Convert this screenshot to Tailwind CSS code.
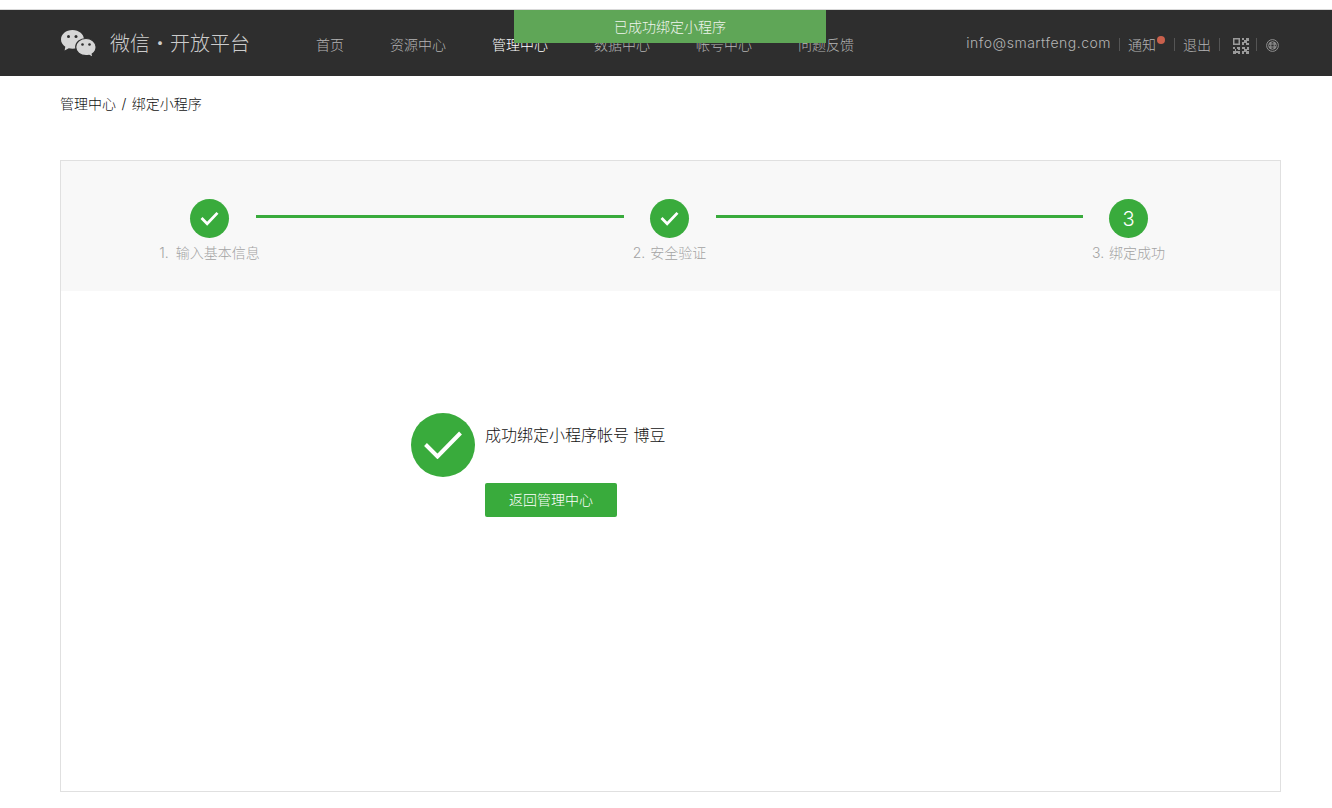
<!DOCTYPE html>
<html lang="zh-CN">
<head>
  <meta charset="UTF-8">
  <title>微信开放平台 - 绑定小程序</title>
  <script src="https://cdn.jsdelivr.net/npm/@tailwindcss/browser@4"></script>
</head>
<body class="bg-white text-[#222] font-['Inter','Noto_Sans_CJK_SC',sans-serif] font-light">
  <div class="relative">
    <!-- Top bar -->
    <div class="h-[10px] border-b border-[#d9d9d9]"></div>
    <header class="h-[66px] bg-[#2e2e2e] flex items-center pl-[60px] pr-[53px] text-[#b4b4b4] text-sm">
      <svg class="w-[37px] h-[30px] shrink-0 mt-[1px]" viewBox="0 0 37 30">
        <path fill="#d6d6d6" d="M12.500 1C6 1 1 5.200 1 10.500c0 3 1.700 5.500 4.300 7.300L4.600 21.500l4.200-2.200c1.200.3 2.400.5 3.700.5 6.500 0 11.500-4.200 11.500-9.300S19 1 12.500 1z"/>
        <path fill="#d6d6d6" stroke="#2e2e2e" stroke-width="1.200" d="M26 9.500c-5.800 0-10.300 3.800-10.300 8.600s4.500 8.600 10.300 8.600c1.100 0 2.200-.2 3.200-.4l3.800 2.200-.8-3.400c2.400-1.600 3.900-4.100 3.900-7 0-4.800-4.400-8.600-10.100-8.600z"/>
        <circle cx="8.500" cy="7.500" r="1.500" fill="#2e2e2e"/>
        <circle cx="16" cy="7.500" r="1.500" fill="#2e2e2e"/>
        <circle cx="22.500" cy="15.500" r="1.300" fill="#2e2e2e"/>
        <circle cx="29.500" cy="15.500" r="1.300" fill="#2e2e2e"/>
      </svg>
      <div class="ml-[13px] text-[20px] leading-none text-[#cccccc] whitespace-nowrap mt-[1px]">微信・开放平台</div>
      <nav class="ml-[66px] flex gap-[46px] whitespace-nowrap mt-[3px]">
        <a>首页</a>
        <a>资源中心</a>
        <a class="text-white">管理中心</a>
        <a>数据中心</a>
        <a>帐号中心</a>
        <a>问题反馈</a>
      </nav>
      <div class="ml-auto flex items-center whitespace-nowrap mt-[3px]">
        <span class="-mt-[3px] tracking-[0.5px]">info@smartfeng.com</span>
        <span class="ml-[8px] w-px h-[13px] bg-[#555]"></span>
        <span class="relative ml-[8px]">通知<span class="absolute -right-[9px] top-[1px] w-[8px] h-[8px] rounded-full bg-[#c9604c]"></span></span>
        <span class="ml-[18px] w-px h-[13px] bg-[#555]"></span>
        <span class="ml-[8px]">退出</span>
        <span class="ml-[8px] w-px h-[13px] bg-[#555]"></span>
        <svg class="ml-[13px] mt-[2px] w-[16px] h-[16px]" viewBox="0 0 16 16" fill="#9a9a9a">
          <path fill-rule="evenodd" d="M0 0h7v7H0zM1.500 1.500v4h4v-4zM9 0h2v2h2V0h3v3h-2v2h2v2h-3V5h-2v2H9V4h2V2H9zM0 9h2v2h2V9h3v3H5v-1H3v2h4v3H5v-1H3v1H0v-3h2v-2H0zM9 9h3v2h2V9h2v3h-2v1h2v3h-3v-2h-2v2H9v-3h2v-2H9z"/>
        </svg>
        <span class="ml-[7px] w-px h-[13px] bg-[#555]"></span>
        <svg class="ml-[9px] mt-[2px] w-[13px] h-[13px]" viewBox="0 0 13 13" fill="none" stroke="#9a9a9a" stroke-width="0.9">
          <circle cx="6.500" cy="6.500" r="5.900"/>
          <circle cx="6.500" cy="6.500" r="3.800"/>
          <path d="M4.800 3v7M8.200 3v7M2.800 5h7.400M2.800 8h7.400"/>
        </svg>
      </div>
    </header>

    <!-- Toast -->
    <div class="absolute top-[10px] left-[514px] w-[312px] h-[33px] bg-[#5fa657] text-[#f0f5ee] text-sm flex items-center justify-center">已成功绑定小程序</div>
  </div>

  <div class="pl-[60px] pr-[51px]">
    <div class="mt-[18px] h-[20px] leading-[20px] text-sm text-[#111] whitespace-nowrap">管理中心 <span class="mx-[1.500px]">/</span> 绑定小程序</div>

    <div class="mt-[46px] h-[632px] border border-[#e0e0e0]">
      <!-- Steps -->
      <div class="h-[130px] bg-[#f8f8f8] pl-[129px] pt-[38px] flex items-start text-sm text-[#a3a3a3]">
        <div class="w-[39px] flex flex-col items-center shrink-0">
          <div class="w-[39px] h-[39px] rounded-full bg-[#39ab3c] flex items-center justify-center">
            <svg class="w-[19px] h-[15px]" viewBox="0 0 20 16" fill="none" stroke="#fff" stroke-width="3"><path d="M1.500 7.500l6 6L18.500 2"/></svg>
          </div>
          <div class="mt-[5px] whitespace-nowrap"><span class="mr-[3px]">1.</span> 输入基本信息</div>
        </div>
        <div class="ml-[27px] mt-[16px] w-[368px] h-[3px] bg-[#39ab3c] shrink-0"></div>
        <div class="ml-[26px] w-[39px] flex flex-col items-center shrink-0">
          <div class="w-[39px] h-[39px] rounded-full bg-[#39ab3c] flex items-center justify-center">
            <svg class="w-[19px] h-[15px]" viewBox="0 0 20 16" fill="none" stroke="#fff" stroke-width="3"><path d="M1.500 7.500l6 6L18.500 2"/></svg>
          </div>
          <div class="mt-[5px] whitespace-nowrap"><span class="mr-[1px]">2.</span> 安全验证</div>
        </div>
        <div class="ml-[27px] mt-[16px] w-[367px] h-[3px] bg-[#39ab3c] shrink-0"></div>
        <div class="ml-[26px] w-[39px] flex flex-col items-center shrink-0">
          <div class="w-[39px] h-[39px] rounded-full bg-[#39ab3c] text-white text-xl flex items-center justify-center">3</div>
          <div class="mt-[5px] whitespace-nowrap"><span class="mr-[1px]">3.</span> 绑定成功</div>
        </div>
      </div>

      <!-- Result -->
      <div class="pt-[122px] pl-[350px] flex items-start">
        <div class="w-[64px] h-[64px] rounded-full bg-[#39ab3c] flex items-center justify-center shrink-0">
          <svg class="w-[38px] h-[28px]" viewBox="0 0 38 28" fill="none" stroke="#fff" stroke-width="4"><path d="M1.500 13.500l12 12L36.500 2"/></svg>
        </div>
        <div class="ml-[10px]">
          <div class="mt-[11px] h-[22px] leading-[22px] text-base whitespace-nowrap text-[#111]">成功绑定小程序帐号 博豆</div>
          <button class="mt-[37px] block w-[132px] h-[34px] rounded-[2px] bg-[#39ab3c] text-white text-sm font-light">返回管理中心</button>
        </div>
      </div>
    </div>
  </div>
</body>
</html>
